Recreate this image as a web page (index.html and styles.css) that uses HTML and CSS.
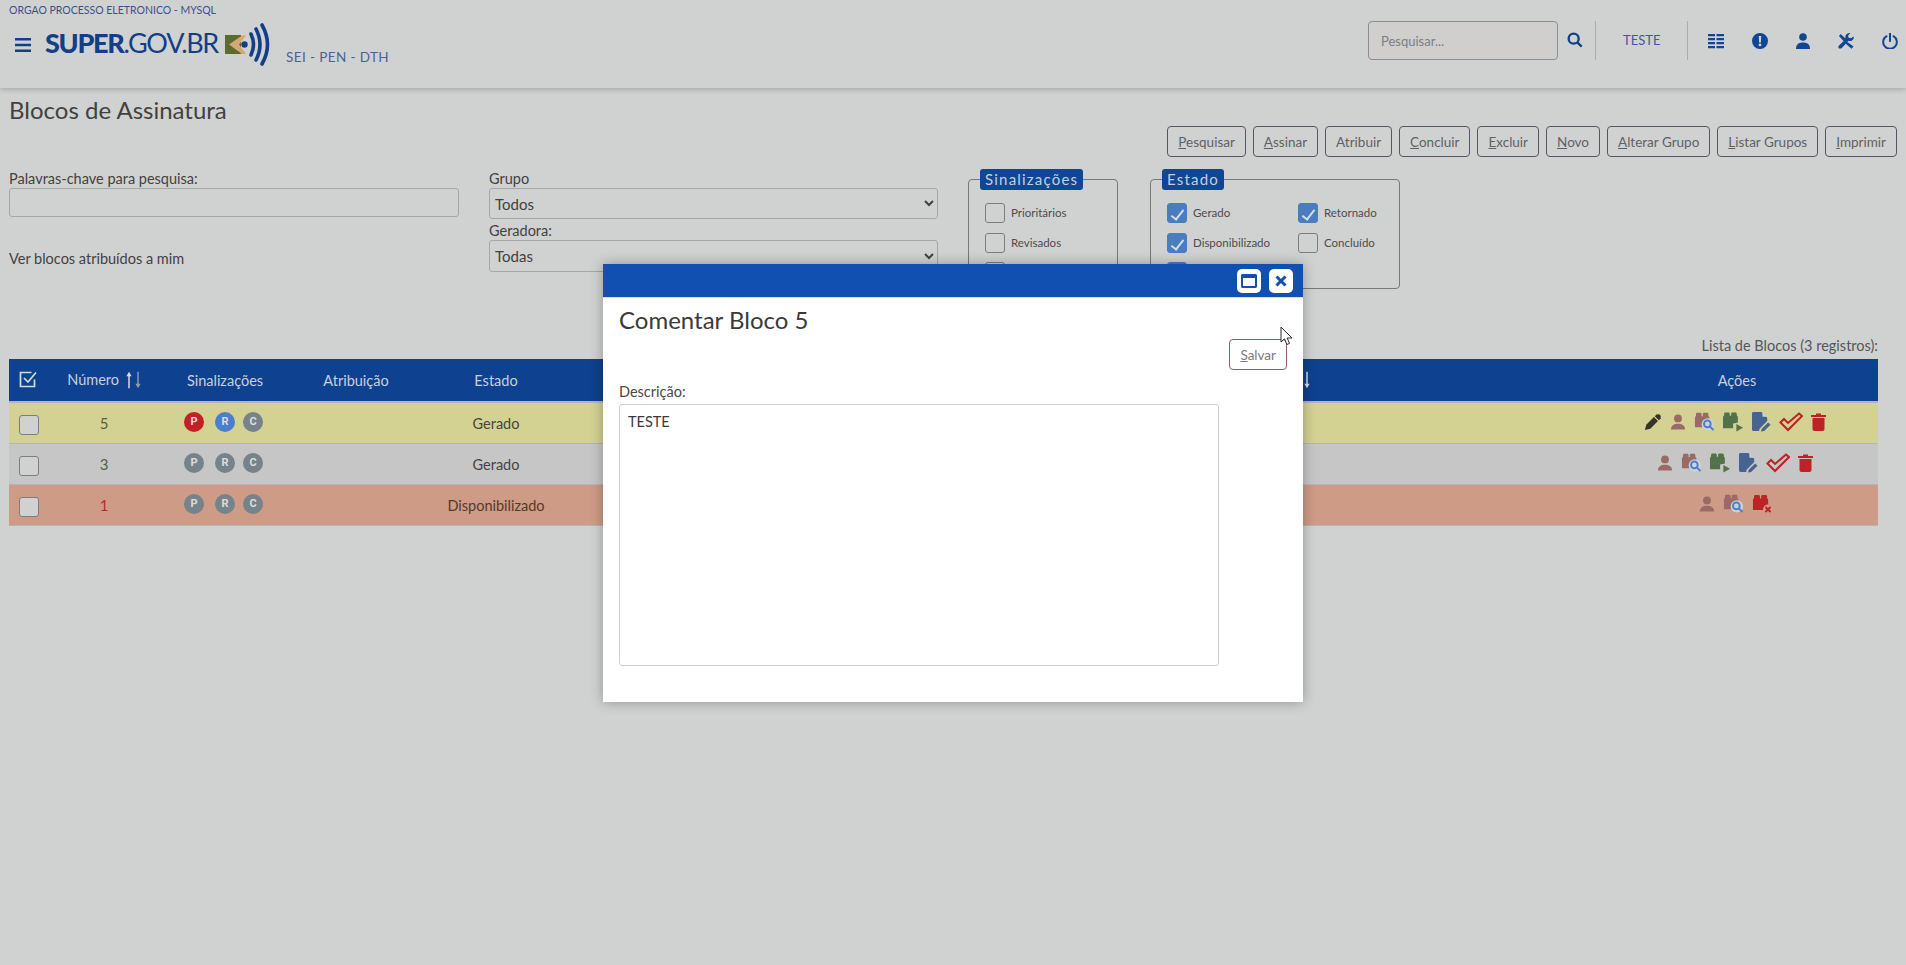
FILE: index.html
```html
<!DOCTYPE html>
<html lang="pt-BR">
<head>
    <meta charset="UTF-8">
    <title>Blocos de Assinatura</title>
    <link rel="stylesheet" href="styles.css">
</head>
<body>
    <svg class="defs" width="0" height="0">
        <symbol id="i-user" viewBox="0 0 18 18"><circle cx="9" cy="5" r="4.4"/><path d="M1 17.5c0-4.5 3.5-6.5 8-6.5s8 2 8 6.5z"/></symbol>
        <symbol id="i-pack" viewBox="0 0 20 19"><path d="M1 6.5c0-.8.5-1.5 1.2-1.5V2.500c0-.8.6-1.500 1.400-1.500h3.800c.8 0 1.400.7 1.400 1.500V5h1.400V2.500c0-.8.6-1.500 1.400-1.500h3.800c.8 0 1.400.7 1.400 1.500V5c.7 0 1.200.7 1.200 1.500V18H1z"/></symbol>
        <symbol id="i-arrow-up" viewBox="0 0 8 22"><path d="M4 0l3.500 6H5v16H3V6H.5z"/></symbol>
        <symbol id="i-arrow-down" viewBox="0 0 8 22"><path d="M4 22L.5 16H3V0h2v16h2.500z"/></symbol>
        <symbol id="i-pen" viewBox="0 0 20 20"><path d="M1 19l1.500-6L11 4.500 15.500 9 7 17.500z"/><path d="M12 3.500l2.500-2.500 1 1 1-1 2.500 2.500-1 1 1 1L16.500 8z"/></symbol>
        <symbol id="i-pack-search" viewBox="0 0 22 21"><use href="#i-pack" width="18" height="17"/><circle cx="14.500" cy="13" r="6.500" class="cut"/><circle cx="14" cy="12.500" r="3.500" class="lens"/><path d="M16.500 15l4 4" class="lens"/></symbol>
        <symbol id="i-pack-play" viewBox="0 0 22 21"><path d="M0 5.500c0-.8.500-1.500 1.100-1.500V2c0-.8.600-1.500 1.300-1.500h3.400c.7 0 1.300.7 1.300 1.500v2h1.400V2c0-.8.600-1.500 1.300-1.500h3.400c.7 0 1.300.7 1.300 1.500v2c.6 0 1.100.7 1.100 1.500V11l-5 1v5H0z" class="green"/><path d="M14 12.500l7 4-7 4z" class="green"/></symbol>
        <symbol id="i-doc" viewBox="0 0 20 21"><path d="M1.500 0H10l6 6v3.500L8 17.500 7.500 20h-6C.700 20 0 19.300 0 18.500v-17C0 .7.700 0 1.500 0z" class="navy"/><path d="M11 0v5h5z" class="cut"/><path d="M9.500 20.500l.8-3L17 11l2.500 2.500-6.700 6.500z" class="navy"/></symbol>
        <symbol id="i-check" viewBox="0 0 24 20"><path d="M1.500 10.500L5 7l4 4L20 1.500 23 4 9 18z" class="outline"/></symbol>
        <symbol id="i-trash" viewBox="0 0 15 18"><path d="M0 2h5V.5h5V2h5v2H0zM1.500 5h12v11c0 1-.8 2-2 2h-8c-1.200 0-2-1-2-2z"/></symbol>
        <symbol id="i-pack-x" viewBox="0 0 20 20"><use href="#i-pack" width="18" height="17"/><circle cx="16" cy="15.500" r="5" class="cut-red"/><path d="M13.500 13l5 5m0-5l-5 5" class="cross"/></symbol>
    </svg>

    <header class="topbar">
        <div class="org">ORGAO PROCESSO ELETRONICO - MYSQL</div>
        <div class="topbar-row">
            <svg class="burger" viewBox="0 0 16 14"><path d="M0 1.200h16M0 7h16M0 12.800h16"/></svg>
            <div class="brand"><b>SUPER</b>.GOV.BR</div>
            <svg class="brand-mark" viewBox="0 0 49 43">
                <rect y="12" width="16" height="19" fill="#5d6b2e"/>
                <path d="M4 21.500L17 12.500h4l-7 9 7 9.500h-4z" fill="#d3a872"/>
                <circle cx="19.500" cy="21.500" r="3.200" fill="#123f87"/>
                <path d="M26 11q5 10.500 0 21M31 6q8 15.500 0 31M37 2q11 19.500 0 39" fill="none" stroke="#123f87" stroke-width="3.600" stroke-linecap="round"/>
            </svg>
            <div class="unit">SEI - PEN - DTH</div>

            <div class="topbar-tools">
                <input class="search" type="text" placeholder="Pesquisar...">
                <svg class="tool-search" viewBox="0 0 24 24"><circle cx="10" cy="10" r="7.500"/><path d="M15.500 15.500l6.500 6.500"/></svg>
                <span class="vline"></span>
                <span class="user-name">TESTE</span>
                <span class="vline"></span>
                <div class="tool-icons">
                    <svg viewBox="0 0 16 16" width="16" height="16"><path d="M0 1h7v2.200H0zM8.500 1H16v2.200H8.500zM0 5h7v2.200H0zM8.500 5H16v2.200H8.500zM0 9h7v2.200H0zM8.500 9H16v2.200H8.500zM0 13h7v2.200H0zM8.500 13H16v2.200H8.500z"/></svg>
                    <svg viewBox="0 0 16 16" width="16" height="16"><path fill-rule="evenodd" d="M8 0a8 8 0 1 1 0 16A8 8 0 0 1 8 0zM6.800 3l.3 6.500h1.800L9.200 3zM8 10.500a1.400 1.400 0 1 0 0 2.800 1.400 1.400 0 0 0 0-2.800z"/></svg>
                    <svg viewBox="0 0 14 16" width="14" height="16"><circle cx="7" cy="4" r="3.800"/><path d="M0 16c0-4.500 2.500-6.500 7-6.500s7 2 7 6.500z"/></svg>
                    <svg viewBox="0 0 16 16" width="16" height="16"><path d="M1 3l1.500-2 5 4.500 1 2-1.300 1.300-2-1zM15.500 13.500l-2 2.300-6-5.300 1.300-1.600 1 .3zM15.800 3.500a4 4 0 0 1-5.300 4.300L3.800 15c-.7.800-3 .8-3.300-.3-.3-.9 0-1.800.5-2.300l6.800-6.500A4 4 0 0 1 12.300.2l-2.200 2.300.5 2.300 2.300.5z"/></svg>
                    <svg class="tool-power" viewBox="0 0 16 16" width="16" height="16"><path d="M4.500 3.200a6.800 6.800 0 1 0 7 0M8 .5v7.500"/></svg>
                </div>
            </div>
        </div>
    </header>

    <main class="page">
        <h1>Blocos de Assinatura</h1>
        <div class="toolbar">
            <button class="btn"><u>P</u>esquisar</button>
            <button class="btn"><u>A</u>ssinar</button>
            <button class="btn">Atribuir</button>
            <button class="btn"><u>C</u>oncluir</button>
            <button class="btn"><u>E</u>xcluir</button>
            <button class="btn"><u>N</u>ovo</button>
            <button class="btn"><u>A</u>lterar Grupo</button>
            <button class="btn"><u>L</u>istar Grupos</button>
            <button class="btn"><u>I</u>mprimir</button>
        </div>

        <div class="filters">
            <div class="filter-col">
                <label class="lbl">Palavras-chave para pesquisa:</label>
                <input class="field" type="text">
                <div class="mine">Ver blocos atribuídos a mim</div>
            </div>
            <div class="filter-col">
                <label class="lbl">Grupo</label>
                <select class="field-select"><option>Todos</option></select>
                <label class="lbl lbl-second">Geradora:</label>
                <select class="field-select field-select-b"><option>Todas</option></select>
            </div>
            <fieldset class="group group-signs">
                <legend>Sinalizações</legend>
                <div class="group-grid">
                    <label class="opt"><input type="checkbox">Prioritários</label>
                    <label class="opt"><input type="checkbox">Revisados</label>
                    <label class="opt"><input type="checkbox">Comentados</label>
                </div>
            </fieldset>
            <fieldset class="group group-state">
                <legend>Estado</legend>
                <div class="group-grid group-grid-two">
                    <label class="opt"><input type="checkbox" checked>Gerado</label>
                    <label class="opt"><input type="checkbox" checked>Retornado</label>
                    <label class="opt"><input type="checkbox" checked>Disponibilizado</label>
                    <label class="opt"><input type="checkbox">Concluído</label>
                    <label class="opt"><input type="checkbox" checked>Recebido</label>
                </div>
            </fieldset>
        </div>

        <div class="caption">Lista de Blocos (3 registros):</div>
        <table class="blocks">
            <colgroup>
                <col class="c-check"><col class="c-num"><col class="c-sign"><col class="c-attr">
                <col class="c-state"><col class="c-docs"><col class="c-desc"><col class="c-acts">
            </colgroup>
            <thead>
                <tr>
                    <th><svg class="all-check" viewBox="0 0 18 18"><path d="M15.500 8.500v7h-14v-14h11"/><path d="M5 7l4 4 8-9.500"/></svg></th>
                    <th>Número <svg class="sort" width="6" height="20"><use href="#i-arrow-up"/></svg><svg class="sort dim" width="6" height="20"><use href="#i-arrow-down"/></svg></th>
                    <th>Sinalizações</th>
                    <th>Atribuição</th>
                    <th>Estado</th>
                    <th>Documentos</th>
                    <th>Descrição <svg class="sort" width="6" height="20"><use href="#i-arrow-up"/></svg><svg class="sort" width="6" height="20"><use href="#i-arrow-down"/></svg></th>
                    <th>Ações</th>
                </tr>
            </thead>
            <tbody>
                <tr class="row-yellow">
                    <td><input class="row-check" type="checkbox"></td>
                    <td class="num">5</td>
                    <td><div class="badges"><span class="badge red">P</span><span class="badge blue">R</span><span class="badge">C</span></div></td>
                    <td></td>
                    <td>Gerado</td>
                    <td></td>
                    <td></td>
                    <td><div class="acts">
                        <svg class="ic-pen" width="18" height="18"><use href="#i-pen"/></svg>
                        <svg class="ic-user" width="16" height="16"><use href="#i-user"/></svg>
                        <svg class="ic-brown" width="21" height="20"><use href="#i-pack-search"/></svg>
                        <svg width="21" height="20"><use href="#i-pack-play"/></svg>
                        <svg width="19" height="20"><use href="#i-doc"/></svg>
                        <svg width="24" height="20"><use href="#i-check"/></svg>
                        <svg class="ic-red" width="15" height="18"><use href="#i-trash"/></svg>
                    </div></td>
                </tr>
                <tr class="row-gray">
                    <td><input class="row-check" type="checkbox"></td>
                    <td class="num">3</td>
                    <td><div class="badges"><span class="badge">P</span><span class="badge">R</span><span class="badge">C</span></div></td>
                    <td></td>
                    <td>Gerado</td>
                    <td></td>
                    <td></td>
                    <td><div class="acts">
                        <svg class="ic-user" width="16" height="16"><use href="#i-user"/></svg>
                        <svg class="ic-brown" width="21" height="20"><use href="#i-pack-search"/></svg>
                        <svg width="21" height="20"><use href="#i-pack-play"/></svg>
                        <svg width="19" height="20"><use href="#i-doc"/></svg>
                        <svg width="24" height="20"><use href="#i-check"/></svg>
                        <svg class="ic-red" width="15" height="18"><use href="#i-trash"/></svg>
                    </div></td>
                </tr>
                <tr class="row-red">
                    <td><input class="row-check" type="checkbox"></td>
                    <td class="num">1</td>
                    <td><div class="badges"><span class="badge">P</span><span class="badge">R</span><span class="badge">C</span></div></td>
                    <td></td>
                    <td>Disponibilizado</td>
                    <td></td>
                    <td></td>
                    <td><div class="acts">
                        <svg class="ic-user" width="16" height="16"><use href="#i-user"/></svg>
                        <svg class="ic-brown" width="21" height="20"><use href="#i-pack-search"/></svg>
                        <svg class="ic-red" width="20" height="20"><use href="#i-pack-x"/></svg>
                    </div></td>
                </tr>
            </tbody>
        </table>
    </main>

    <!-- modal comentar -->
    <div class="modal">
        <div class="modal-bar">
            <button class="modal-btn"><svg viewBox="0 0 16 14" width="16" height="14"><path fill-rule="evenodd" d="M0 1.500C0 .7.700 0 1.500 0h13c.8 0 1.500.7 1.500 1.500v11c0 .8-.7 1.500-1.500 1.500h-13C.7 14 0 13.300 0 12.500zM2 4v8h12V4z"/></svg></button>
            <button class="modal-btn"><svg viewBox="0 0 12 12" width="12" height="12"><path d="M1.500 1.500l9 9m0-9l-9 9" fill="none" stroke="#1150b0" stroke-width="3"/></svg></button>
        </div>
        <div class="modal-body">
            <h2>Comentar Bloco 5</h2>
            <div class="modal-actions"><button class="btn btn-save"><u>S</u>alvar</button></div>
            <label class="lbl modal-lbl">Descrição:</label>
            <textarea class="modal-text">TESTE</textarea>
        </div>
    </div>

    <svg class="cursor" viewBox="0 0 13 20" width="13" height="20"><path d="M1 1v15l3.500-3.200 2.300 5.700 2.700-1.100-2.300-5.400H12z" fill="#fff" stroke="#2b2b2b" stroke-width="1"/></svg>
</body>
</html>
```

FILE: styles.css
```css
html, body {
    margin: 0;
    padding: 0;
    height: 100%;
}
body {
    font-family: Lato, "Open Sans", Arial, sans-serif;
    font-size: 15px;
    color: #43413f;
    background: #d0d2d1;
    overflow: hidden;
    position: relative;
}
.defs {
    position: absolute;
}
.cut { fill: #d0d2d1; }
.cut-red { fill: #ce9b86; }
.lens { fill: none; stroke: #4a7fd0; stroke-width: 2; }
.green { fill: #537247; }
.navy { fill: #46648f; }
.outline { fill: none; stroke: #bd2226; stroke-width: 2; }
.cross { fill: none; stroke: #bd2226; stroke-width: 2; }

/* topo */
.topbar {
    height: 88px;
    padding-top: 4px;
    box-sizing: border-box;
    box-shadow: 0 2px 5px rgba(0,0,0,0.18);
}
.org {
    padding-left: 9px;
    font-size: 10.5px;
    line-height: 12px;
    color: #3d4f8e;
}
.topbar-row {
    display: flex;
    align-items: flex-start;
    height: 72px;
}
.burger {
    width: 16px;
    height: 14px;
    margin: 22px 0 0 15px;
    fill: none;
    stroke: #123f87;
    stroke-width: 2.400;
}
.brand {
    margin: 12px 0 0 14px;
    font-size: 27px;
    line-height: 30px;
    letter-spacing: -1.300px;
    color: #123f87;
}
.brand b {
    font-weight: 900;
}
.brand-mark {
    width: 49px;
    height: 43px;
    margin: 7px 0 0 7px;
}
.unit {
    margin: 33px 0 0 12px;
    font-size: 13.500px;
    line-height: 16px;
    letter-spacing: 0.400px;
    color: #4a6394;
}
.topbar-tools {
    margin-left: auto;
    padding-right: 8px;
    display: flex;
    align-items: flex-start;
}
.search {
    width: 190px;
    height: 39px;
    box-sizing: border-box;
    margin-top: 5px;
    padding: 0 12px;
    border: 1px solid #8b8c95;
    border-radius: 4px;
    background: #d0cfce;
    font-family: inherit;
    font-size: 13px;
}
.search::placeholder {
    color: #7d7e84;
}
.tool-search {
    width: 16px;
    height: 16px;
    margin: 16px 0 0 9px;
    fill: none;
    stroke: #123f87;
    stroke-width: 3.500;
}
.vline {
    width: 1px;
    height: 39px;
    margin: 5px 0 0 12px;
    background: #a9abad;
}
.user-name {
    margin: 16px 28px 0 27px;
    width: 36px;
    font-size: 13px;
    line-height: 16px;
    color: #3c5a9c;
}
.user-name + .vline {
    margin-left: 0;
}
.tool-icons {
    display: flex;
    gap: 28px;
    margin: 17px 0 0 20px;
    fill: #0f4796;
}
.tool-power {
    fill: none;
    stroke: #0f4796;
    stroke-width: 2;
    stroke-linecap: round;
}

/* pagina */
.page {
    padding: 0 9px;
}
h1 {
    margin: 7px 0 0;
    font-size: 24px;
    line-height: 30px;
    font-weight: 400;
    color: #43413f;
}
.toolbar {
    display: flex;
    justify-content: flex-end;
    gap: 7px;
    margin-top: 1px;
}
.btn {
    height: 31px;
    padding: 0 10px;
    border: 1px solid #5a5360;
    border-radius: 4px;
    background: transparent;
    font-family: inherit;
    font-size: 13.500px;
    color: #5f5f68;
}
.filters {
    display: grid;
    grid-template-columns: 480px 479px 182px 250px;
    align-items: start;
    padding-top: 12px;
    height: 180px;
    box-sizing: border-box;
}
.filter-col {
    padding-top: 1px;
    display: flex;
    flex-direction: column;
    align-items: flex-start;
}
.lbl {
    font-size: 14.500px;
    line-height: 18px;
    color: #43413f;
}
.lbl-second {
    margin-top: 3px;
}
.field {
    width: 450px;
    height: 29px;
    box-sizing: border-box;
    border: 1px solid #a6a7ab;
    border-radius: 3px;
    background: #d0d2d1;
}
.mine {
    margin-top: 33px;
    font-size: 14.500px;
    line-height: 18px;
}
.field-select {
    width: 449px;
    height: 31px;
    box-sizing: border-box;
    padding-left: 1px;
    border: 1px solid #a6a7ab;
    border-radius: 3px;
    background: #d0d2d1;
    font-family: inherit;
    font-size: 15px;
    color: #43413f;
}
.field-select-b {
    height: 32px;
}
.group {
    margin: 0;
    padding: 0;
    height: 120px;
    box-sizing: border-box;
    border: 1px solid #77777c;
    border-radius: 4px;
}
.group-signs {
    width: 150px;
}
.group-state {
    width: 250px;
}
.group legend {
    margin-left: 11px;
    padding: 0 5px;
    height: 21px;
    box-sizing: border-box;
    border-radius: 3px;
    background: #0f4796;
    font-size: 15px;
    line-height: 21px;
    letter-spacing: 1.200px;
    color: #c3cfdf;
}
.group-grid {
    display: grid;
    grid-auto-rows: 29.500px;
    padding: 13px 0 0 16px;
}
.group-grid-two {
    grid-template-columns: 131px 1fr;
}
.opt {
    display: flex;
    align-items: flex-start;
    gap: 6px;
    font-size: 11.500px;
    line-height: 20px;
    color: #4d4b4b;
}
input[type="checkbox"] {
    appearance: none;
    width: 20px;
    height: 20px;
    margin: 0;
    box-sizing: border-box;
    border: 1px solid #7c7c82;
    border-radius: 3px;
    background: #d0d2d1;
    position: relative;
    flex: none;
}
input[type="checkbox"]:checked {
    background: #4a7cc0;
    border-color: #4a7cc0;
}
input[type="checkbox"]:checked::after {
    content: "";
    position: absolute;
    left: 6px;
    top: 3px;
    width: 5px;
    height: 11px;
    border: solid #d5dde6;
    border-width: 0 2px 2px 0;
    transform: rotate(38deg);
}

/* tabela */
.caption {
    width: 1869px;
    text-align: right;
    font-size: 14.500px;
    line-height: 18px;
    color: #55555c;
    margin-bottom: 3px;
}
.blocks {
    width: 1869px;
    table-layout: fixed;
    border-collapse: collapse;
    border-top: 1px solid #4c5a24;
}
.c-check { width: 38px; }
.c-num { width: 114px; }
.c-sign { width: 128px; }
.c-attr { width: 134px; }
.c-state { width: 146px; }
.c-docs { width: 371px; }
.c-desc { width: 656px; }
.c-acts { width: 282px; }
.blocks th {
    height: 42px;
    padding: 0;
    background: #0e418f;
    border-top: 1px solid #d0d2d1;
    border-bottom: 2px solid #b2b5b8;
    font-size: 14.500px;
    font-weight: 400;
    color: #c7d0dc;
}
.blocks td {
    height: 40px;
    padding: 0;
    text-align: center;
    border-bottom: 1px solid #b5b5b5;
    font-size: 14.500px;
    color: #46443f;
}
.row-yellow td { background: #d3d293; }
.row-gray td { background: #c6c6c6; }
.row-red td { background: #ce9b86; }
.num { color: #55604f; }
.blocks td.num { color: #55604f; font-size: 15px; }
.row-red .num.num { color: #b92b27; }
.row-red td { color: #54392c; }
.all-check {
    width: 18px;
    height: 18px;
    fill: none;
    stroke: #d5dbe3;
    stroke-width: 1.700;
    display: block;
    margin: 0 0 0 10px;
}
.sort {
    fill: #d5dbe3;
    vertical-align: -5px;
    margin-left: 3px;
}
.sort.dim {
    fill: #8f99a8;
}
.row-check.row-check {
    display: block;
    margin: 3px 0 0 10px;
    background: #d0d2d1;
}
.badges {
    display: flex;
    justify-content: center;
    margin-top: -3px;
    padding-right: 3px;
}
.badge {
    width: 20px;
    height: 20px;
    border-radius: 50%;
    background: #76838a;
    font-family: Roboto, Arial, sans-serif;
    font-size: 11px;
    font-weight: 700;
    line-height: 20px;
    color: #dcdcdc;
}
.badge + .badge {
    margin-left: 11px;
}
.badge + .badge + .badge {
    margin-left: 8px;
}
.badge.red { background: #c32026; }
.badge.blue { background: #4a7fd0; }
.acts {
    display: flex;
    justify-content: center;
    align-items: center;
    gap: 8px;
    margin-top: -3px;
    padding-right: 4px;
}
.ic-pen { fill: #36322e; }
.ic-user { fill: #9c6a66; }
.ic-brown { fill: #9c6a66; }
.ic-red { fill: #bd2226; }
.row-yellow .cut { fill: #d3d293; }
.row-gray .cut { fill: #c6c6c6; }
.row-red .cut { fill: #ce9b86; }

/* modal */
.modal {
    position: absolute;
    left: 603px;
    top: 264px;
    width: 700px;
    height: 438px;
    background: #fff;
    box-shadow: 0 0 12px rgba(0,0,0,0.3);
}
.modal-bar {
    height: 33px;
    display: flex;
    justify-content: flex-end;
    align-items: center;
    gap: 8px;
    padding-right: 10px;
    background: #1150b0;
    border-bottom: 1px solid #d5dde8;
}
.modal-btn {
    width: 24px;
    height: 24px;
    padding: 0;
    border: 0;
    border-radius: 5px;
    background: #fff;
    display: flex;
    align-items: center;
    justify-content: center;
    fill: #1150b0;
}
.modal-body {
    padding: 7px 16px 0;
    display: flex;
    flex-direction: column;
    align-items: flex-start;
}
h2 {
    margin: 0;
    font-size: 24px;
    line-height: 30px;
    font-weight: 400;
    color: #3b3a38;
}
.modal-actions {
    width: 668px;
    display: flex;
    justify-content: flex-end;
    margin-top: 4px;
}
.btn-save {
    border-color: #8a6070;
    color: #777a80;
    margin-right: -0px;
}
.modal-lbl {
    margin-top: 13px;
    color: #4a4846;
}
.modal-text {
    width: 600px;
    height: 262px;
    box-sizing: border-box;
    margin: 3px 0 0;
    padding: 8px;
    border: 1px solid #ccced6;
    border-radius: 3px;
    overflow-y: scroll;
    resize: none;
    font-family: inherit;
    font-size: 14.500px;
    line-height: 18px;
    color: #3b3a38;
}
.cursor {
    position: absolute;
    left: 1280px;
    top: 326px;
}
```
